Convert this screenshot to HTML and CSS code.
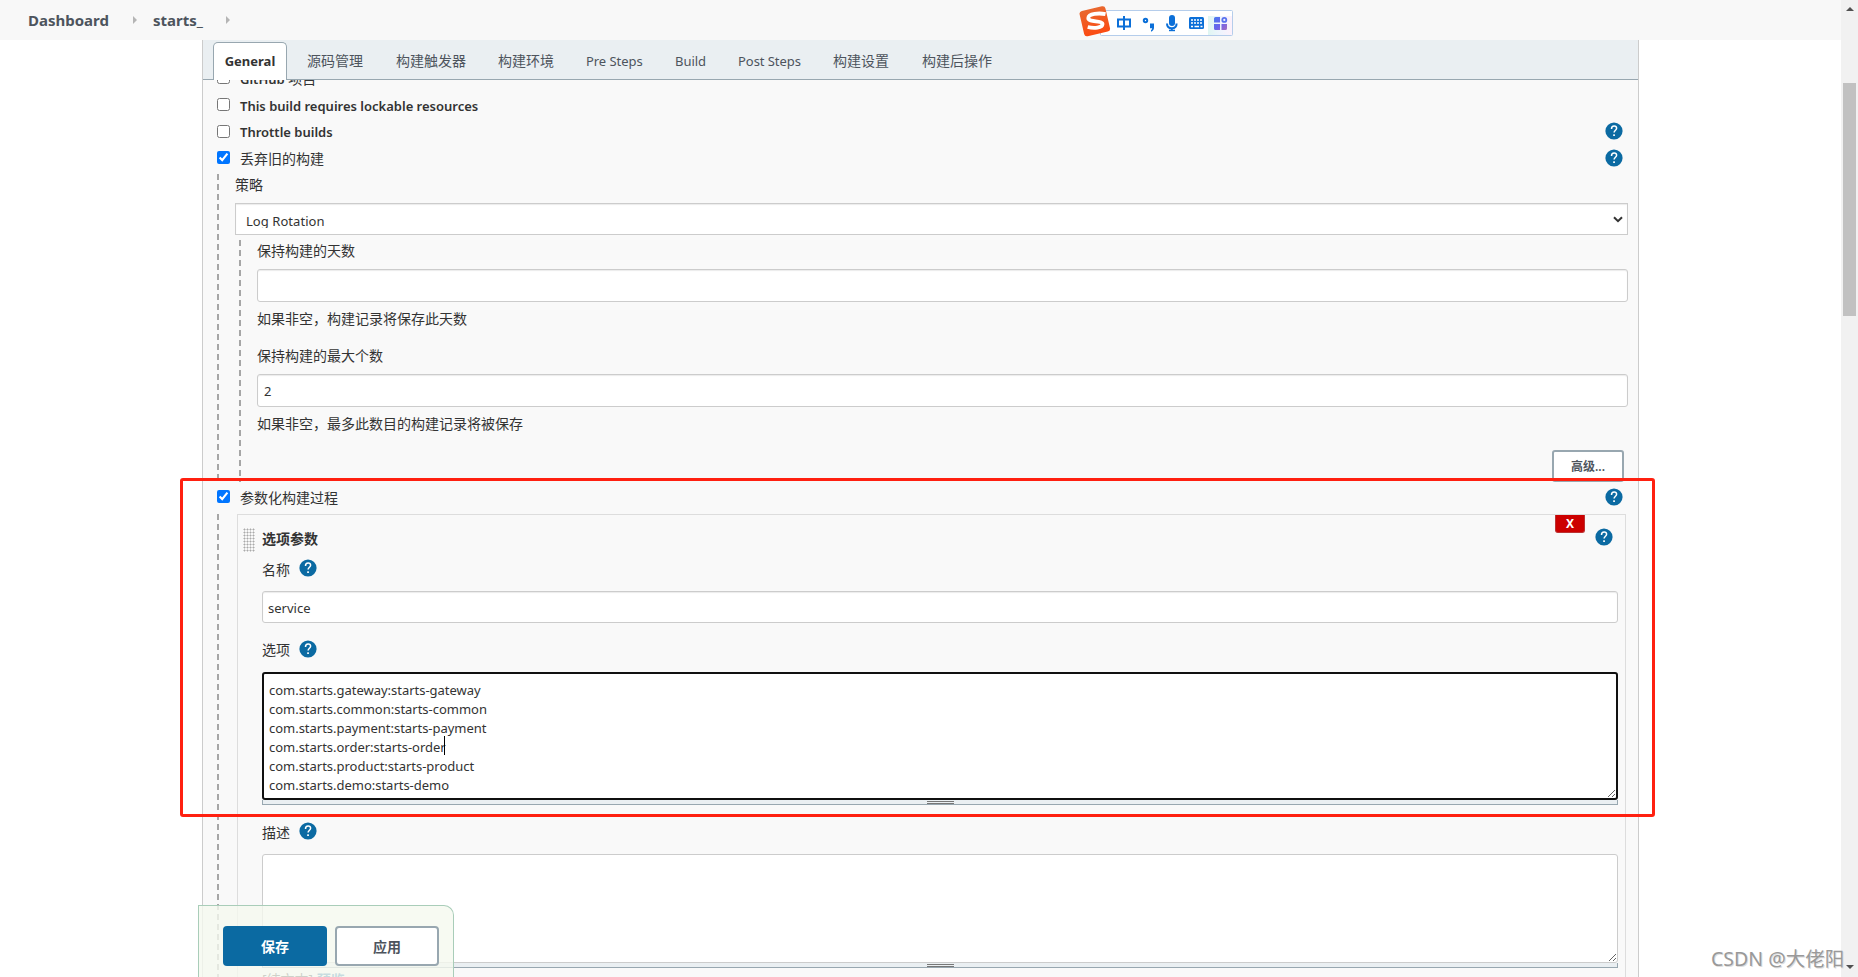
FILE: index.html
```
<!DOCTYPE html>
<html lang="zh-CN">
<head>
  <meta charset="UTF-8">
  <title>starts_ Config [Jenkins]</title>
  <link rel="stylesheet" href="styles.css">
</head>
<body>
  <svg width="0" height="0" class="defs">
    <symbol id="help" viewBox="0 0 18 18">
      <circle cx="9" cy="9" r="8.6" fill="#0b6aa2"/>
      <path d="M6.5 6.9C6.5 5 7.6 4.1 9.1 4.1c1.500 0 2.500.9 2.500 2.200 0 1.900-2.500 2.100-2.500 4.300" fill="none" stroke="#fff" stroke-width="1.500"/>
      <rect x="8.200" y="12.300" width="1.700" height="1.700" fill="#fff"/>
    </symbol>
  </svg>

  <header class="header">
    <a class="crumb crumb-home">Dashboard</a><i class="arrow"></i>
    <a class="crumb crumb-job">starts_</a><i class="arrow"></i>
  </header>

  <main class="panel">
    <nav class="tabs">
      <a class="tab active">General</a>
      <a class="tab w57">源码管理</a>
      <a class="tab w70">构建触发器</a>
      <a class="tab w57">构建环境</a>
      <a class="tab w57 en">Pre Steps</a>
      <a class="tab w31 en">Build</a>
      <a class="tab w63 en">Post Steps</a>
      <a class="tab w57">构建设置</a>
      <a class="tab w70">构建后操作</a>
    </nav>

    <form class="form">
      <div class="row first"><input type="checkbox"><label class="bold"><span class="en">GitHub</span> <span class="thin">项目</span></label></div>
      <div class="row"><input type="checkbox"><label class="bold en">This build requires lockable resources</label></div>
      <div class="row short"><input type="checkbox"><label class="bold en">Throttle builds</label><svg class="help"><use href="#help"/></svg></div>
      <div class="row"><input type="checkbox" checked><label>丢弃旧的构建</label><svg class="help"><use href="#help"/></svg></div>

      <section class="nested discard">
        <div class="label">策略</div>
        <div class="select"><span>Log Rotation</span>
          <svg width="10" height="7" viewBox="0 0 10 7"><path d="M1 1.200l4 4 4-4" fill="none" stroke="#333" stroke-width="2"/></svg>
        </div>
        <div class="nested rotation">
          <div class="label">保持构建的天数</div>
          <input type="text" class="input">
          <div class="hint">如果非空，构建记录将保存此天数</div>
          <div class="label">保持构建的最大个数</div>
          <input type="text" class="input" value="2">
          <div class="hint">如果非空，最多此数目的构建记录将被保存</div>
          <button type="button" class="advanced">高级...</button>
        </div>
      </section>

      <div class="row param"><input type="checkbox" checked><label>参数化构建过程</label><svg class="help"><use href="#help"/></svg></div>

      <section class="nested params">
        <div class="chunk">
          <div class="chunk-head">
            <i class="drag"></i><b>选项参数</b>
            <button type="button" class="delete">X</button>
            <svg class="help"><use href="#help"/></svg>
          </div>
          <div class="name">名称<svg class="help"><use href="#help"/></svg></div>
          <input type="text" class="input service" value="service">
          <div class="name choices">选项<svg class="help"><use href="#help"/></svg></div>
          <div class="area">
            <textarea class="focused">com.starts.gateway:starts-gateway
com.starts.common:starts-common
com.starts.payment:starts-payment
com.starts.order:starts-order
com.starts.product:starts-product
com.starts.demo:starts-demo</textarea>
            <i class="caret"></i>
          </div>
          <div class="handle"></div>
          <div class="name desc">描述<svg class="help"><use href="#help"/></svg></div>
          <textarea class="description"></textarea>
          <div class="handle"></div>
          <div class="preview">[纯文本] <b>预览</b></div>
        </div>
      </section>
    </form>
  </main>

  <div class="bottom-bar">
    <button type="button" class="save">保存</button>
    <button type="button" class="apply">应用</button>
  </div>

  <div class="highlight"></div>

  <div class="scrollbar">
    <i class="up"></i><i class="thumb"></i><i class="down"></i>
  </div>

  <!-- input method toolbar -->
  <div class="ime">
    <svg width="156" height="32" viewBox="0 0 156 32">
      <defs>
        <linearGradient id="orange" x1="0" y1="0" x2="0" y2="1"><stop offset="0" stop-color="#e9682f"/><stop offset="1" stop-color="#fb4b12"/></linearGradient>
        <linearGradient id="grid" x1="0" y1="0" x2="1" y2="1"><stop offset="0" stop-color="#4a7af0"/><stop offset=".55" stop-color="#6b62ea"/><stop offset="1" stop-color="#a66cc0"/></linearGradient>
        <linearGradient id="tint"><stop offset="0" stop-color="#dff6f2"/><stop offset=".5" stop-color="#eef4fd"/><stop offset="1" stop-color="#fdf1fb"/></linearGradient>
      </defs>
      <rect x="21.500" y="5.500" width="132" height="25" rx="1" fill="#fff" stroke="#b5cdeb"/>
      <rect x="129" y="11" width="24" height="19" fill="url(#tint)"/>
      <rect x="2.500" y="3.200" width="26.500" height="26" rx="3" fill="url(#orange)" transform="rotate(-13 16 16)"/>
      <path d="M26.500 9.200C20 7.700 9.500 8.700 9.300 13c-.2 4.500 14.500 2.300 14.200 6.200-.2 3.700-8.500 4.500-14.800 2.800" fill="none" stroke="#fff" stroke-width="3.800"/>
      <g transform="translate(0 1)">
        <g fill="none" stroke="#0b6fd8" stroke-width="2">
          <path d="M39 13.500h12v7H39zM45 10v14"/>
          <circle cx="66.500" cy="14.500" r="1.700"/>
          <path d="M88 17.500c0 3.200 2 4.800 4.800 4.800s4.800-1.600 4.800-4.800M92.800 22.500V25"/>
        </g>
        <g fill="#0b6fd8">
          <path d="M71 17.500h4v4c0 2-1 3.500-3 4.200v-1.500c.8-.5 1.200-1.200 1.200-2H71z"/>
          <rect x="90" y="9" width="6" height="11" rx="3"/><rect x="90" y="23.700" width="6" height="1.500"/>
          <rect x="110" y="11" width="15" height="12" rx="1.500"/>
        </g>
        <path d="M112 14h2m1 0h2m1 0h2m1 0h2M112 17h2m1 0h2m1 0h2m1 0h2M112 20.500h2m1.500 0h4.500m1.500 0h2" stroke="#fff" stroke-width="1.700"/>
        <path fill="url(#grid)" d="M136.500 11h4.500v5.500h-6V12.500q0-1.500 1.500-1.500zM135 18h6v6h-4.500q-1.500 0-1.500-1.500zM142.500 18h5.500v4.500q0 1.500-1.500 1.500h-4z"/>
        <circle cx="145.300" cy="13.900" r="2" fill="none" stroke="#5871ee" stroke-width="1.800"/>
      </g>
    </svg>
  </div>
  <div class="watermark">CSDN @大佬阳</div>
</body>
</html>
```
FILE: styles.css
```
* { box-sizing: border-box; }
body { margin: 0; height: 977px; overflow: hidden; background: #fff; color: #333; font: 14px "Noto Sans", "Noto Sans CJK SC", sans-serif; }
input, textarea, button { font-family: inherit; color: inherit; margin: 0; outline: none; }
.defs { position: absolute; }
.en { font-size: 13px; }
.help { width: 18px; height: 18px; flex: none; }

.header { height: 40px; background: #f8f8f8; display: flex; align-items: center; padding-left: 28px; }
.crumb { color: #4d545d; font-size: 15px; font-weight: 700; white-space: nowrap; }
.crumb-home { width: 105px; }
.crumb-job { width: 73px; margin-left: 16px; }
.header .arrow { border-left: 4px solid #b5b5b5; border-top: 4px solid transparent; border-bottom: 4px solid transparent; }

.panel { width: 1437px; height: 937px; margin-left: 202px; background: #f9f9f9; border: 1px solid #ccc; border-width: 0 1px; overflow: hidden; }
.tabs { position: relative; z-index: 1; height: 40px; background: #eaeff2; border-bottom: 1px solid #98a7b0; display: flex; gap: 32px; padding-left: 10px; }
.tab { height: 39px; line-height: 41px; color: #4d545d; white-space: nowrap; }
.tab.en { line-height: 43px; margin-left: -1px; letter-spacing: -.05px; }
.tab.en + .tab.en { margin-left: 0; }
.tab.active { width: 74px; height: 38px; margin: 2px -12px 0 0; line-height: 36px; font-size: 13px; font-weight: 700; text-align: center; color: #333; background: #fff; border: 1px solid #98a7b0; border-bottom: 0; border-radius: 5px 5px 0 0; }
.w57 { width: 57px; }
.w70 { width: 70px; }
.w31 { width: 31px; }
.w63 { width: 63px; }

.form { padding: 0 10px 0 14px; }
.row { height: 27px; display: flex; align-items: center; padding-right: 5px; }
.row.first { margin-top: -16px; }
.row.short { height: 26px; }
.row input { width: 13px; height: 13px; margin-right: 10px; }
.row label { line-height: 20px; padding-top: 2px; }
.row .help { margin-left: auto; }
.bold { font-weight: 600; }
.thin { font-weight: 400; }

.nested { background: repeating-linear-gradient(#a6a6a6 0 6px, transparent 6px 10px) 0 0 / 2px 100% no-repeat; padding-left: 18px; }
.discard { height: 308px; margin-top: 3px; }
.label { height: 29px; line-height: 22px; }
.select { height: 32px; background: #fff; border: 1px solid #ccc; display: flex; align-items: center; justify-content: space-between; padding: 0 4px 0 10px; font-size: 13px; letter-spacing: .05px; box-shadow: inset 0 1px 1px rgba(0,0,0,.08); }
.select span { height: 15px; line-height: 16px; overflow: hidden; margin-top: 2px; }
.rotation { height: 242px; margin: 5px 0 0 4px; }
.input { display: block; width: 100%; height: 33px; padding: 1px 6px 0; background: #fff; border: 1px solid #ccc; border-radius: 3px; font-size: 13px; box-shadow: inset 0 1px 1px rgba(0,0,0,.08); }
.hint { height: 43px; line-height: 34px; }
.advanced { display: block; width: 72px; height: 32px; margin: 0 4px 0 auto; padding: 0; background: #fff; border: 2px solid #98a7b0; border-radius: 3px; font-size: 12px; font-weight: 600; color: #4d545d; }

.row.param { height: 32px; padding-bottom: 3px; }
.params { height: 463px; padding: 0 2px 0 20px; }
.chunk { height: 463px; border: 1px solid #ddd; border-bottom: 0; padding: 0 7px 0 24px; }
.chunk-head { height: 43px; margin-left: -19px; display: flex; }
.drag { width: 12px; height: 24px; margin: 13px 7px 0 0; background: radial-gradient(circle at 1.5px 1.5px, #aaa 0 .9px, transparent 1.1px) 0 0 / 3px 3px; }
.chunk-head b { line-height: 47px; flex: 1; }
.delete { width: 30px; height: 18px; padding: 0; background: #c00; color: #fff; border: 1px solid #b33; border-top: 0; border-radius: 0 0 3px 3px; font-size: 12px; font-weight: 700; line-height: 17px; }
.chunk-head .help { margin: 13px 5px 0 10px; }
.name { height: 33px; line-height: 24px; display: flex; }
.name .help { margin: 1px 0 0 9px; }
.service { height: 32px; padding-left: 5px; }
.choices { height: 49px; padding-top: 15px; }
.choices .help { margin-top: 2px; }
.area { position: relative; }
textarea { display: block; width: 100%; background: #fff; resize: both; }
.focused { height: 128px; padding: 7px 5px; border: 2px solid #101010; border-radius: 3px; font-size: 13px; line-height: 19px; letter-spacing: -.02px; overflow: hidden; }
.caret { position: absolute; left: 182px; top: 64px; width: 1px; height: 19px; background: #000; }
.description { height: 109px; border: 1px solid #ccc; border-radius: 3px; }
.handle { height: 5px; border: 1px solid #98a7b0; border-top: 0; background: linear-gradient(#777, #777) 50% 1px / 27px 1px no-repeat, linear-gradient(#777, #777) 50% 3px / 27px 1px no-repeat, #eaeff2; }
.desc { height: 49px; padding-top: 16px; }
.preview { line-height: 23px; }
.preview b { color: #0b6aa2; }

.bottom-bar { position: absolute; left: 198px; top: 905px; width: 256px; height: 72px; padding: 20px 0 0 24px; display: flex; gap: 8px; background: rgba(245,249,239,.8); border: 1px solid #a9cdb9; border-bottom: 0; border-radius: 0 10px 0 0; }
.bottom-bar button { width: 104px; height: 40px; padding: 0; border-radius: 4px; font-size: 14px; font-weight: 700; }
.save { background: #0b6aa2; border: 0; color: #fff; }
.apply { background: #fff; border: 2px solid #98a7b0; color: #4d545d; }

.highlight { position: absolute; left: 180px; top: 478px; width: 1475px; height: 339px; border: 3px solid #ff2010; border-radius: 3px; }

.scrollbar { position: absolute; right: 0; top: 0; width: 17px; height: 977px; padding: 7px 2px; background: #f1f1f1; display: flex; flex-direction: column; align-items: center; }
.up, .down { border: 4px solid transparent; border-top: 0; border-bottom-color: #505050; }
.down { border-top: 4px solid #505050; border-bottom: 0; margin: auto 0 1px; }
.thumb { width: 13px; height: 233px; margin-top: 72px; background: #c1c1c1; }

.ime { position: absolute; left: 1079px; top: 5px; width: 156px; height: 32px; }
.watermark { position: absolute; left: 1711px; top: 943px; line-height: 32px; font-size: 19.5px; color: #999; text-shadow: 1px 1px 0 #ddd; white-space: nowrap; }
```
